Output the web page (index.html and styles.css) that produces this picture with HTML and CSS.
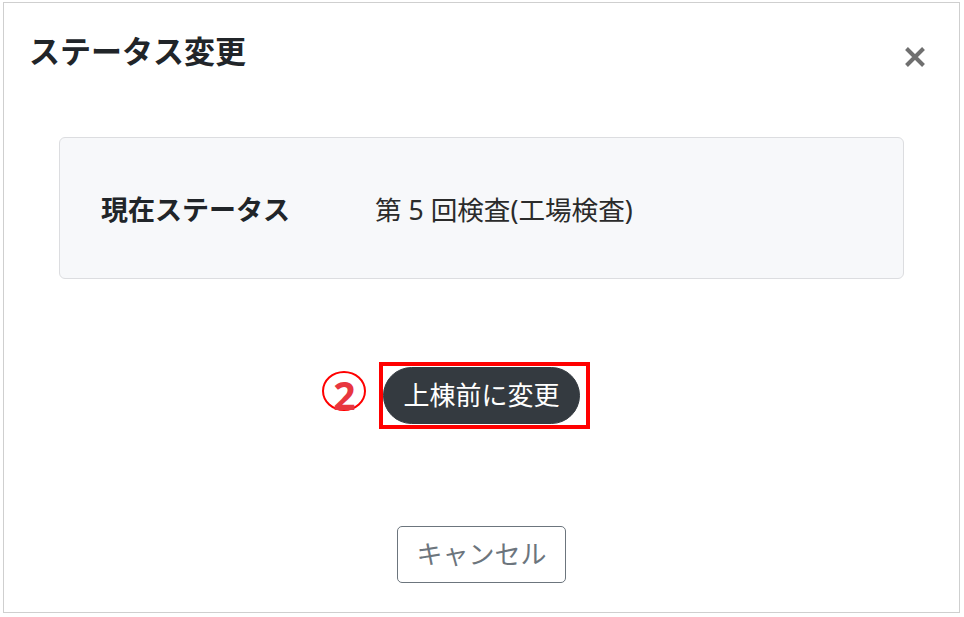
FILE: index.html
```html
<!DOCTYPE html>
<html lang="ja">
<head>
    <meta charset="UTF-8">
    <meta name="viewport" content="width=device-width, initial-scale=1.0">
    <title>ステータス変更</title>
    <link rel="stylesheet" href="styles.css">
</head>
<body>

<div class="modal">
    <!-- Header -->
    <div class="modal-header">
        <h5 class="modal-title">ステータス変更</h5>
        <button class="btn-close" type="button" aria-label="Close">
            <svg width="22" height="22" viewBox="0 0 22 22">
                <path d="M2.5 2.5 L19.5 19.5 M19.5 2.5 L2.5 19.5" stroke="#6f6f6f" stroke-width="4" stroke-linecap="butt"/>
            </svg>
        </button>
    </div>

    <!-- Body -->
    <div class="modal-body">
        <div class="status-box">
            <span class="status-label">現在ステータス</span>
            <span class="status-value">第 5 回検査(工場検査)</span>
        </div>

        <div class="action-row">
            <div class="highlight">
                <span class="step-mark">2</span>
                <button class="btn-dark" type="button">上棟前に変更</button>
            </div>
        </div>
    </div>

    <!-- Footer -->
    <div class="modal-footer">
        <button class="btn-outline" type="button">キャンセル</button>
    </div>
</div>

</body>
</html>
```

FILE: styles.css
```css
/* Page */
body {
    margin: 0;
    background: #ffffff;
    font-family: "Noto Sans", "Noto Sans CJK JP", sans-serif;
    color: #212529;
}

/* Modal frame */
.modal {
    margin: 2px 0 0 3px;
    width: 955px;
    height: 609px;
    border: 1px solid #cfcfcf;
    background: #ffffff;
}

.modal-header {
    display: flex;
    justify-content: space-between;
    align-items: flex-start;
    padding: 30px 33px 0 25px;
}

.modal-title {
    margin: 0;
    font-size: 31px;
    line-height: 37px;
    font-weight: 700;
    color: #212529;
}

.btn-close {
    margin-top: 13px;
    padding: 0;
    border: none;
    background: none;
    width: 22px;
    height: 22px;
    display: block;
}

.btn-close svg {
    display: block;
}

.modal-body {
    padding: 0 55px;
    margin-top: 67px;
}

/* Current status panel */
.status-box {
    height: 140px;
    display: grid;
    grid-template-columns: 274px 1fr;
    align-items: center;
    padding-left: 41px;
    background: #f7f8fa;
    border: 1px solid #dcdde0;
    border-radius: 6px;
}

.status-label {
    font-size: 27px;
    font-weight: 700;
    color: #212529;
}

.status-value {
    font-size: 26.6px;
    color: #2b2b2b;
}

/* Action button with annotation */
.action-row {
    display: flex;
    justify-content: center;
    margin-top: 83px;
    padding-left: 6px;
}

.highlight {
    position: relative;
    border: 4px solid #ff0000;
    padding: 1px 6px 1px 0;
}

.step-mark {
    position: absolute;
    right: calc(100% + 17px);
    top: 5px;
    box-sizing: border-box;
    width: 44px;
    height: 40px;
    border: 2px solid #ff0000;
    border-radius: 50%;
    display: flex;
    justify-content: center;
    align-items: center;
    padding-top: 6px;
    font-family: "Noto Sans", sans-serif;
    font-size: 39px;
    line-height: 1;
    font-weight: 700;
    color: #e8363f;
}

.btn-dark {
    display: block;
    font-family: inherit;
    font-size: 26px;
    line-height: 39px;
    padding: 8px 19px;
    border: 1px solid #343a40;
    border-radius: 30px;
    background: #343a40;
    color: #ffffff;
}

/* Footer */
.modal-footer {
    display: flex;
    justify-content: center;
    margin-top: 97px;
}

.btn-outline {
    font-family: inherit;
    font-size: 26px;
    line-height: 39px;
    padding: 8px 18px;
    border: 1px solid #6c757d;
    border-radius: 5px;
    background: #ffffff;
    color: #6c757d;
}
```
